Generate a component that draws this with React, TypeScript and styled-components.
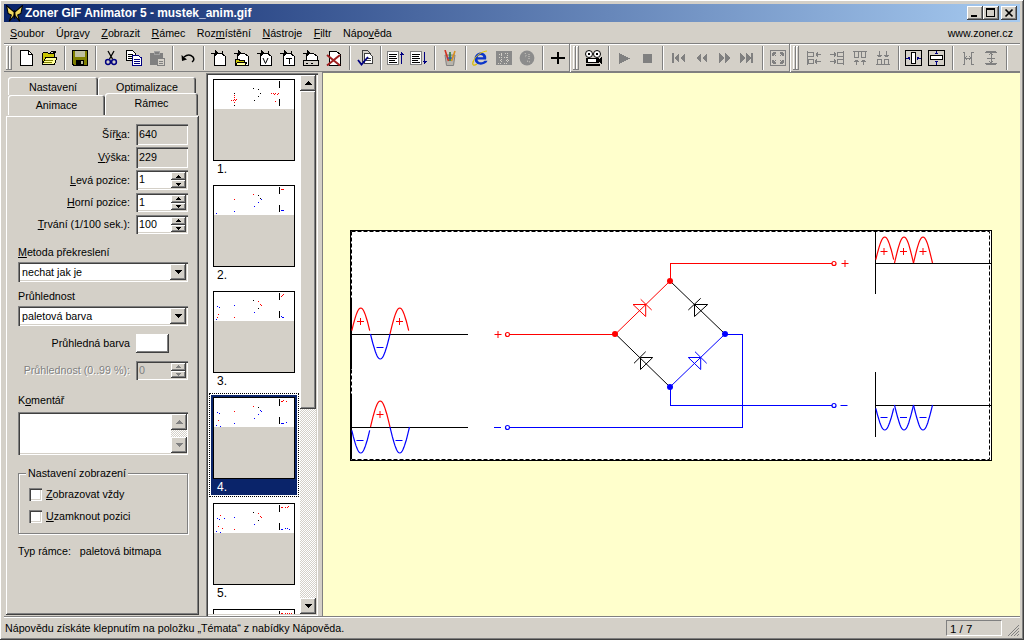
import React from 'react';
import styled, { createGlobalStyle, css } from 'styled-components';

const GlobalStyle = createGlobalStyle`
  html, body { margin: 0; padding: 0; background: #d4d0c8; }
  #root { width: 1024px; height: 640px; overflow: hidden; }
  * { box-sizing: border-box; }
`;

const raised = css`box-shadow: inset -1px -1px 0 #404040, inset 1px 1px 0 #fff, inset -2px -2px 0 #808080, inset 2px 2px 0 #d4d0c8;`;
const sunken = css`box-shadow: inset 1px 1px 0 #808080, inset 2px 2px 0 #404040, inset -1px -1px 0 #fff, inset -2px -2px 0 #d4d0c8;`;
const etched = css`box-shadow: 1px 0 0 #fff; background: #808080;`;
const dither = `repeating-conic-gradient(#fff 0 25%, #d4d0c8 0 50%) 0 0 / 2px 2px`;

const Win = styled.div`
  width: 1024px; height: 640px; padding: 4px 4px 2px; background: #d4d0c8;
  display: flex; flex-direction: column;
  font: 10.7px/13px "Liberation Sans", Arial, sans-serif; color: #000;
  box-shadow: inset -1px -1px 0 #404040, inset 1px 1px 0 #fff, inset -2px -2px 0 #808080;
`;
const TitleBar = styled.div`
  height: 18px; flex: none; display: flex; align-items: center; padding: 0 3px 0 2px;
  background: linear-gradient(90deg, #0a246a, #a6caf0);
`;
const TitleText = styled.span`
  color: #fff; font-weight: 700; font-size: 11.95px; margin-left: 2px; flex: 1; white-space: nowrap;
`;
const CapBtn = styled.span<{ $gap?: number }>`
  width: 16px; height: 14px; background: #d4d0c8; ${raised}; display: flex; margin-left: ${p => p.$gap ?? 0}px;
  svg { display: block; }
`;
const MenuBar = styled.div`
  height: 20px; margin-top: 1px; flex: none; display: flex; align-items: center; padding: 0 7px 0 6px; gap: 11.5px;
`;
const MenuSpacer = styled.span`flex: 1;`;
const MenuItem = styled.span`white-space: nowrap;`;
const ToolRow = styled.div`
  height: 29px; flex: none; display: flex; border-top: 1px solid #808080;
  box-shadow: inset 0 1px 0 #fff, inset 0 -1px 0 #808080;
`;
const ToolGroup = styled.div<{ $end?: boolean }>`
  display: flex; align-items: center; padding-left: 2px; height: 28px;
  ${p => p.$end ? '' : 'border-right: 1px solid #808080; box-shadow: 1px 0 0 #fff; margin-right: 1px;'}
`;
const Grip = styled.div<{ $w: number }>`
  width: ${p => p.$w}px; height: 24px; display: flex; gap: 0; flex: none;
  span { width: 3px; height: 24px; box-shadow: inset -1px -1px 0 #808080, inset 1px 1px 0 #fff; }
`;
const ToolBtn = styled.div`
  width: 23px; height: 22px; flex: none; display: flex; align-items: center; justify-content: center;
  svg { display: block; }
`;
const ToolSep = styled.div`
  width: 8px; height: 24px; flex: none; display: flex; justify-content: center;
  i { width: 1px; height: 24px; display: block; ${etched}; }
`;
const Main = styled.div`flex: 1; min-height: 0; display: flex;`;
const LeftPane = styled.div`width: 202px; flex: none; padding: 5px 0 0 4px; display: flex; flex-direction: column;`;
const TabRow = styled.div`display: flex; height: 18px; flex: none; align-items: flex-end;`;
const Tab = styled.div<{ $w: number; $h: number; $active?: boolean }>`
  width: ${p => p.$w}px; height: ${p => p.$h}px; flex: none; text-align: center; background: #d4d0c8;
  padding-top: 4px; border-radius: 3px 3px 0 0; position: relative;
  box-shadow: inset 1px 1px 0 #fff, inset -1px 0 0 #404040, inset -2px 0 0 #808080;
  ${p => p.$active ? 'z-index: 2;' : ''}
`;
const TabBody = styled.div`
  margin: 1px 0 1px -2px; width: 193px; flex: 1; padding: 8px 11px 0 12px; position: relative; z-index: 1;
  ${raised}; display: flex; flex-direction: column;
`;
const FrontTabs = styled.div`display: flex; height: 20px; flex: none; align-items: flex-end; margin-top: 0;`;
const FieldRow = styled.div<{ $h: number; $mt?: number }>`
  display: grid; grid-template-columns: 1fr 52px; column-gap: 6px; align-items: center;
  height: ${p => p.$h}px; margin-top: ${p => p.$mt ?? 3}px; flex: none;
`;
const Lbl = styled.label<{ $off?: boolean }>`
  text-align: right; white-space: nowrap; display: block;
  ${p => p.$off ? 'color: #808080; text-shadow: 1px 1px 0 #fff;' : ''}
`;
const ReadOnly = styled.div`
  height: 100%; padding: 4px 3px; ${sunken}; background: #d4d0c8;
`;
const Spin = styled.div<{ $off?: boolean }>`
  height: 100%; padding: 3px 0 0 3px; ${sunken}; background: ${p => p.$off ? '#d4d0c8' : '#fff'};
  color: ${p => p.$off ? '#808080' : '#000'}; display: flex; justify-content: space-between;
`;
const SpinBtns = styled.div`width: 15px; margin: -1px 2px 2px 0; display: flex; flex-direction: column;`;
const SpinBtn = styled.div`
  flex: 1; background: #d4d0c8; ${raised}; display: flex; align-items: center; justify-content: center;
`;
const Caption = styled.div<{ $mt: number }>`
  margin-top: ${p => p.$mt}px; height: 14px; flex: none; white-space: nowrap;
`;
const Combo = styled.div`
  height: 20px; margin-top: 2px; flex: none; ${sunken}; background: #fff; padding: 4px 0 0 4px;
  display: flex; justify-content: space-between;
`;
const ComboBtn = styled.div`
  width: 16px; height: 16px; margin: -2px 2px 0 0; background: #d4d0c8; ${raised};
  display: flex; align-items: center; justify-content: center;
`;
const Swatch = styled.div`height: 19px; width: 33px; background: #fff; box-shadow: inset -1px -1px 0 #404040, inset 1px 1px 0 #fff, inset -2px -2px 0 #808080;`;
const Memo = styled.div`
  height: 43px; margin-top: 4px; flex: none; ${sunken}; background: #fff; display: flex; justify-content: flex-end; padding: 2px 1px 2px 0;
`;
const MemoScroll = styled.div`width: 16px; display: flex; flex-direction: column; justify-content: space-between; background: ${dither};`;
const MemoBtn = styled.div`
  width: 16px; height: 16px; background: #d4d0c8; ${raised}; display: flex; align-items: center; justify-content: center;
`;
const Group = styled.div`
  position: relative; height: 61px; margin-top: 18px; flex: none; border: 1px solid #808080; padding: 14px 0 0 10px;
  box-shadow: 1px 1px 0 #fff, inset 1px 1px 0 #fff; display: flex; flex-direction: column; gap: 9px;
`;
const Legend = styled.span`
  position: absolute; top: -7px; left: 7px; background: #d4d0c8; padding: 0 2px; white-space: nowrap;
`;
const CheckRow = styled.div`display: flex; align-items: center; gap: 4px; height: 13px;`;
const CheckBox = styled.span`width: 13px; height: 13px; background: #fff; ${sunken}; flex: none;`;
const InfoLine = styled.div`margin-top: 11px; white-space: pre;`;

const ListFrame = styled.div`
  width: 112px; flex: none; margin-top: 1px; ${sunken}; padding: 2px; display: flex;
`;
const ListInner = styled.div`flex: 1; background: #fff; overflow: hidden; padding: 0 0 0 1px; display: flex; flex-direction: column; gap: 2px;`;
const Item = styled.div<{ $on?: boolean }>`
  width: 90px; height: 104px; flex: none; padding: 1px; border: 1px dotted ${p => p.$on ? '#000' : 'transparent'};
  background: ${p => p.$on ? '#0a246a' : 'transparent'}; background-clip: content-box;
`;
const Thumb = styled.div`
  width: 82px; height: 82px; margin: 2px 0 0 2px; border: 1px solid #000; background: #d4d0c8; overflow: hidden;
`;
const ThumbTop = styled.svg`display: block; width: 80px; height: 29px; background: #fff;`;
const ItemLabel = styled.div<{ $on?: boolean }>`
  padding: 2px 0 0 6px; color: ${p => p.$on ? '#fff' : '#000'}; font-size: 12px;
`;
const VScroll = styled.div`width: 16px; flex: none; display: flex; flex-direction: column; background: ${dither};`;
const VBtn = styled.div`width: 16px; height: 16px; flex: none; background: #d4d0c8; ${raised}; display: flex; align-items: center; justify-content: center;`;
const VThumb = styled.div`width: 16px; height: 318px; flex: none; background: #d4d0c8; ${raised};`;
const VFill = styled.div`flex: 1;`;
const Splitter = styled.div`width: 4px; flex: none;`;
const Canvas = styled.div`
  flex: 1; min-width: 0; background: #ffffcc; padding: 158px 0 0 28px; box-shadow: inset 1px 0 0 #808080, inset 0 1px 0 #808080;
  svg { display: block; }
`;
const Status = styled.div`
  height: 22px; flex: none; display: flex; align-items: center; padding: 0 0 0 1px; box-shadow: inset 0 1px 0 #808080, inset 0 2px 0 #fff;
`;
const StatusText = styled.span`flex: 1; white-space: nowrap; margin-top: 2px;`;
const StatusPanel = styled.div`
  width: 56px; height: 16px; padding: 2px 0 0 3px; margin: 2px 5px 0 0; font-size: 11.5px;
  border: 1px solid #808080; border-right-color: #fff; border-bottom-color: #fff;
`;
const SizeGrip = styled.svg`display: block; margin-top: 6px;`;

/* ---------- icons ---------- */
const I = ({ children, w = 16, h = 16, crisp = true }: { children: React.ReactNode; w?: number; h?: number; crisp?: boolean }) => (
  <svg width={w} height={h} viewBox={`0 0 ${w} ${h}`} shapeRendering={crisp ? 'crispEdges' : 'auto'} fill="none">{children}</svg>
);
const doc = 'M2.5 .5H10.5L14.5 4.5V15.5H2.5Z';
const Corner = () => <path d="M10.5 .5V4.5H14.5" stroke="#000" />;
const Arrow = () => <path d="M0 2.5H4V0L8 3L4 6V4H0Z" fill="#000" />;
const FrameDoc = ({ children }: { children?: React.ReactNode }) => (
  <I>
    <path d="M3.5 3.5H10.5L14.5 6.5V15.5H3.5Z" fill="#fff" stroke="#000" />
    <path d="M11 1V4" stroke="#000" />
    <Arrow />
    {children}
  </I>
);
const gr = '#808080';
const ic: Record<string, React.ReactNode> = {
  newDoc: <I><path d={doc} fill="#fff" stroke="#000" /><Corner /></I>,
  open: <I>
    <path d="M1.5 3.5L3 2H6L7.5 3.5H13.5V14.5H1.5Z" fill="#c8c400" stroke="#000" />
    <path d="M1.5 14.5L4.5 7.5H16L13.5 14.5Z" fill="#ffff9c" stroke="#000" />
    <path d="M9 2.5Q12 0 14 2M14 .5V2.5H12" stroke="#000" />
    <path d="M3 12h8M4 10h8" stroke="#808000" /></I>,
  save: <I>
    <path d="M.5 .5H15.5V15.5H2L.5 14Z" fill="#808000" stroke="#000" />
    <rect x="3" y="1" width="10" height="6" fill="#c0c0a0" />
    <rect x="4" y="10" width="8" height="5" fill="#000" />
    <rect x="9" y="11" width="2" height="3" fill="#c0c0a0" /></I>,
  cut: <I crisp={false}>
    <path d="M5 1L9.5 9M11 1L6.5 9" stroke="#000" strokeWidth="1.3" />
    <circle cx="5" cy="12" r="2.4" stroke="#000080" strokeWidth="1.5" />
    <circle cx="11" cy="12" r="2.4" stroke="#000080" strokeWidth="1.5" /></I>,
  copy: <I>
    <path d="M.5 .5H6.5L9.5 3.5V10.5H.5Z" fill="#fff" stroke="#000" />
    <path d="M2 4h5M2 6h5M2 8h5" stroke="#000" />
    <path d="M6.5 5.5H12.5L15.5 8V15.5H6.5Z" fill="#fff" stroke="#000080" />
    <path d="M8 9h6M8 11h6M8 13h6" stroke="#000080" /></I>,
  paste: <I>
    <path d="M1 3H14V15H1Z" fill={gr} />
    <path d="M5 1H10V4H5Z" fill={gr} stroke="#a0a0a0" />
    <path d="M8.5 8.5H15.5V15.5H8.5Z" fill="#d4d0c8" stroke={gr} />
    <path d="M10 11h4M10 13h4" stroke={gr} /></I>,
  undo: <I crisp={false}>
    <path d="M4 7Q9 3 13 7Q15 10 12 12" stroke="#000" strokeWidth="1.5" />
    <path d="M1.5 5L2 11L7 9.5Z" fill="#000" /></I>,
  fNew: <FrameDoc />,
  fOpen: <I>
    <path d="M3.5 3.5H10.5L14.5 6.5V15.5H3.5Z" fill="#fff" stroke="#000" />
    <Arrow />
    <path d="M1.5 9.5H5L6 10.5H10.5V15.5H1.5Z" fill="#c8c400" stroke="#000" />
    <path d="M1.5 15.5L3.5 12H13L10.5 15.5Z" fill="#ffff9c" stroke="#000" /></I>,
  fV: <FrameDoc><path d="M6 8L8.5 13.5L11 8" stroke="#000" strokeWidth="1" shapeRendering="auto" /></FrameDoc>,
  fT: <FrameDoc><path d="M6 8H12M9 8V14" stroke="#000" /></FrameDoc>,
  fScan: <I>
    <path d="M3.5 3.5H10.5L14.5 6.5V10H3.5Z" fill="#fff" stroke="#000" />
    <Arrow />
    <path d="M.5 10.5H15.5V15.5H.5Z" fill="#d4d0c8" stroke="#000" />
    <path d="M3 13h2M8 13h2" stroke="#000" /></I>,
  fDel: <I>
    <path d="M3.5 1.5H10.5L14.5 4.5V15.5H3.5Z" fill="#fff" stroke="#000" />
    <g shapeRendering="auto"><path d="M1 5L14 15.5M14 5L1 15.5" stroke="#a02020" strokeWidth="2" /></g></I>,
  check: <I>
    <path d="M5.5 .5H10.5L13.5 3.5V11.5H5.5Z" fill="#d4d0c8" stroke="#404040" />
    <path d="M7.5 3.5H12.5L15.5 6.5V13.5H7.5Z" fill="#fff" stroke="#404040" />
    <path d="M9 8h5M9 10h5" stroke="#404040" />
    <g shapeRendering="auto"><path d="M1 10L4.5 14.5L11 7" stroke="#000080" strokeWidth="1.8" /></g></I>,
  lstUp: <I w={17}>
    <rect x=".5" y="1.5" width="11" height="13" fill="#fff" stroke={gr} />
    <path d="M2 4h8M2 6h7M2 8h8M2 10h6M2 12h8" stroke="#000" />
    <path d="M14.5 2V14" stroke="#000080" /><path d="M12.5 4.5h4M13.5 3.5h2" stroke="#000080" /></I>,
  lstDn: <I w={17}>
    <rect x=".5" y="1.5" width="11" height="13" fill="#fff" stroke={gr} />
    <path d="M2 4h8M2 6h7M2 8h8M2 10h6M2 12h8" stroke="#000" />
    <path d="M14.5 2V14" stroke="#000080" /><path d="M12.5 11.5h4M13.5 12.5h2" stroke="#000080" /></I>,
  brush: <I crisp={false}>
    <path d="M3 5H13L11.5 15.5H4.5Z" fill="#b8b4ac" stroke="#808080" />
    <path d="M3 0L6.5 11" stroke="#d03020" strokeWidth="1.6" />
    <path d="M8 2V11" stroke="#208040" strokeWidth="1.6" />
    <path d="M13 1L9.5 11" stroke="#d89020" strokeWidth="1.6" />
    <path d="M5.5 8L10 8" stroke="#2040c0" strokeWidth="1" /></I>,
  ie: <I crisp={false} w={17}>
    <path d="M14 9.5H5.5C5.5 12.5 10 13.5 12.5 10.8H15.5C13.5 16 3 16.5 2.5 9C2.5 3.5 8.5 1 12 3.5C14.5 5.5 14.5 7.5 14 9.5ZM5.6 7.3H11.3C11 4.5 6.3 4.3 5.6 7.3Z" fill="#0b35c9" />
    <path d="M1.5 11C-.5 15.5 2 16 5 14" stroke="#d8b800" strokeWidth="1.2" />
    <path d="M1 11.5C4 5 10 1.5 15 1" stroke="#e8c800" strokeWidth="1" />
  </I>,
  dith: <I><rect x="0" y="1" width="16" height="14" fill="#8a8a8a" />
    <path d="M3 4h3M9 3h4M3 7h4M8 7h4M4 10h2M10 10h4M2 13h3M8 13h3M5 3v9M11 3v10" stroke="#d4d0c8" strokeDasharray="1 1" /></I>,
  globe: <I crisp={false}><circle cx="8" cy="8" r="7.4" fill="#8c8c8c" />
    <path d="M6 3Q8 6 6 7M10 4V9M8 11L11 12" stroke="#d4d0c8" strokeDasharray="1 1" /></I>,
  plus: <I><rect x="1" y="7" width="14" height="2" fill="#000" /><rect x="7" y="2" width="2" height="12" fill="#000" /></I>,
  film: <I w={18}>
    <circle cx="5" cy="4" r="3.5" fill="#fff" stroke="#000" shapeRendering="auto" />
    <circle cx="13" cy="4" r="3.5" fill="#fff" stroke="#000" shapeRendering="auto" />
    <path d="M4 3h2v2h-2zM12 3h2v2h-2z" fill="#000" />
    <rect x="2" y="8" width="13" height="5" fill="#000" />
    <rect x="4" y="9" width="8" height="3" fill="#fff" />
    <rect x="2" y="14" width="14" height="2" fill="#000" />
    <path d="M15 9L18 7V14L15 12Z" fill="#000" /></I>,
  play: <I><path d="M3 3L14 8.5L3 14Z" fill={gr} /></I>,
  stop: <I><rect x="4" y="4" width="9" height="9" fill={gr} /></I>,
  first: <I><rect x="2" y="3" width="2" height="10" fill={gr} /><path d="M9 3V13L4 8ZM15 3V13L10 8Z" fill={gr} /></I>,
  prev: <I><path d="M8 3V13L3 8ZM14 3V13L9 8Z" fill={gr} /></I>,
  next: <I><path d="M3 3V13L8 8ZM9 3V13L14 8Z" fill={gr} /></I>,
  last: <I><path d="M1 3V13L6 8ZM7 3V13L12 8Z" fill={gr} /><rect x="12" y="3" width="2" height="10" fill={gr} /></I>,
  fit: <I><rect x=".5" y=".5" width="15" height="15" stroke={gr} fill="#d4d0c8" />
    <path d="M3 3h3M3 3v3M13 3h-3M13 3v3M3 13h3M3 13v-3M13 13h-3M13 13v-3" stroke={gr} strokeWidth="1.5" />
    <path d="M6 6l-3 -3M10 6l3 -3M6 10l-3 3M10 10l3 3" stroke={gr} shapeRendering="auto" /></I>,
  a1: <I><path d="M1.5 1V15" stroke={gr} /><path d="M2 2.5H7.5V6.5H2M2 9.5H7.5V13.5H2Z" stroke={gr} /><path d="M10 4.5h5M10 4.5l2 -2M10 4.5l2 2M9 11.5h6M9 11.5l2 -2M9 11.5l2 2" stroke={gr} /></I>,
  a2: <I><path d="M14.5 1V15" stroke={gr} /><path d="M14 2.5H8.5V6.5H14M14 9.5H8.5V13.5H14Z" stroke={gr} /><path d="M1 4.5h6M7 4.5l-2 -2M7 4.5l-2 2M1 11.5h6M7 11.5l-2 -2M7 11.5l-2 2" stroke={gr} /></I>,
  a3: <I><path d="M1 1.5H15" stroke={gr} /><path d="M2.5 2V7.5H6.5V2M9.5 2V7.5H13.5V2" stroke={gr} /><path d="M4.5 15V10M4.5 10l-2 2M4.5 10l2 2M11.5 15V10M11.5 10l-2 2M11.5 10l2 2" stroke={gr} /></I>,
  a4: <I><path d="M1 14.5H15" stroke={gr} /><path d="M2.5 14V9.5H6.5V14M9.5 14V9.5H13.5V14" stroke={gr} /><path d="M4.5 1V7M4.5 7l-2 -2M4.5 7l2 -2M11.5 1V7M11.5 7l-2 -2M11.5 7l2 -2" stroke={gr} /></I>,
  cH: <I w={17}><rect x=".5" y=".5" width="16" height="15" fill="#d4d0c8" stroke="#000" />
    <rect x="6.5" y="2.5" width="4" height="11" fill="#fff" stroke="#000" />
    <path d="M1 8h4M12 8h4M4.5 6.5v3M12.5 6.5v3M3.5 7v2M13.5 7v2" stroke="#000080" /></I>,
  cV: <I w={17}><rect x=".5" y=".5" width="16" height="15" fill="#d4d0c8" stroke="#000" />
    <rect x="2.5" y="5.5" width="12" height="4" fill="#fff" stroke="#000" />
    <path d="M8.5 1v3M8.5 11v4M7 3.5h3M7 11.5h3" stroke="#000080" /></I>,
  dH: <I><path d="M2.5 2H4.5V14H2.5M13.5 2H11.5V14H13.5" stroke={gr} /><path d="M5 8H11M5 8l2 -2M5 8l2 2M11 8l-2 -2M11 8l-2 2" stroke={gr} /></I>,
  dV: <I><path d="M2 2.5H14M2 13.5H14M3 1.5h10M3 14.5h10" stroke={gr} /><path d="M8 3V13M8 3l-2 2M8 3l2 2M8 13l-2 -2M8 13l2 -2M4 8h8" stroke={gr} /></I>,
};

const Tools = ({ items }: { items: string[] }) => (
  <>
    {items.map((k, i) =>
      k === '|' ? <ToolSep key={i}><i /></ToolSep> : <ToolBtn key={i}>{ic[k]}</ToolBtn>
    )}
  </>
);

const Tri = ({ up, c = '#000' }: { up?: boolean; c?: string }) => (
  <svg width="7" height="4" viewBox="0 0 7 4" shapeRendering="crispEdges" style={{ display: 'block' }}>
    <path d={up ? 'M3 0h1v1h1v1h1v1h1v1H0V3h1V2h1V1h1z' : 'M0 0h7v1H6v1H5v1H4v1H3V3H2V2H1V1H0z'} fill={c} />
  </svg>
);
const Tiny = ({ up, c = '#000' }: { up?: boolean; c?: string }) => (
  <svg width="5" height="3" viewBox="0 0 5 3" shapeRendering="crispEdges" style={{ display: 'block' }}>
    <path d={up ? 'M2 0h1v1h1v1h1v1H0V2h1V1h1z' : 'M0 0h5v1H4v1H3v1H2V2H1V1H0z'} fill={c} />
  </svg>
);

const SpinBox = ({ v, off }: { v: string; off?: boolean }) => (
  <Spin $off={off}>
    <span>{v}</span>
    <SpinBtns>
      <SpinBtn><Tiny up c={off ? gr : '#000'} /></SpinBtn>
      <SpinBtn><Tiny c={off ? gr : '#000'} /></SpinBtn>
    </SpinBtns>
  </Spin>
);

/* ---------- thumbnails ---------- */
type D = [number, number, string];
const R = '#f00', B = '#00f', K = '#000';
const dots: D[][] = [
  [[39, 8, K], [44, 9, K], [46, 13, K], [44, 16, K], [40, 20, K], [20, 13, K], [20, 15, R], [20, 17, R], [20, 19, R], [17, 20, R], [19, 20, R], [21, 20, R], [22, 19, R], [20, 22, R], [20, 25, K], [57, 13, R], [59, 13, R], [60, 14, R], [61, 13, R], [63, 14, R], [64, 13, R], [61, 21, R]],
  [[39, 8, R], [44, 9, K], [46, 12, K], [47, 13, B], [44, 16, B], [40, 20, B], [20, 13, R], [20, 25, B], [2, 27, B], [67, 3, R], [68, 3, R], [69, 3, R], [67, 24, B], [68, 24, B], [69, 24, B]],
  [[39, 8, K], [44, 9, R], [46, 12, R], [47, 13, R], [44, 16, K], [40, 20, B], [20, 13, B], [20, 25, R], [3, 14, B], [5, 15, B], [4, 22, R], [3, 25, R], [2, 27, B], [68, 3, R], [69, 2, R], [67, 4, R], [68, 25, B], [69, 25, B], [67, 24, B]],
  [[39, 8, R], [44, 9, K], [46, 12, B], [47, 13, B], [44, 16, B], [40, 20, B], [20, 13, R], [20, 25, B], [3, 14, B], [5, 15, B], [4, 22, R], [2, 27, B], [6, 28, B], [67, 3, R], [68, 3, R], [69, 2, R], [72, 3, R], [67, 25, B], [68, 25, B], [69, 25, B], [72, 24, B]],
  [[39, 8, K], [44, 9, R], [46, 12, R], [47, 13, R], [44, 16, K], [40, 20, B], [20, 13, B], [20, 25, R], [6, 11, R], [3, 14, B], [5, 15, B], [10, 14, B], [4, 22, R], [8, 24, R], [2, 27, B], [6, 28, B], [67, 3, R], [68, 3, R], [71, 3, R], [73, 3, R], [74, 2, R], [67, 25, B], [68, 25, B], [71, 24, B], [73, 24, B], [75, 25, B]],
  [[67, 3, R], [68, 3, R], [71, 3, R], [73, 3, R], [75, 3, R], [77, 3, R]],
];
const ThumbArt = ({ i }: { i: number }) => (
  <ThumbTop viewBox="0 0 80 29" shapeRendering="crispEdges">
    <path d="M65.5 1V8M65.5 19V26" stroke="#000" />
    {dots[i].map(([x, y, c], n) => <rect key={n} x={x} y={y} width="1" height="1" fill={c} />)}
  </ThumbTop>
);

/* ---------- diagram ---------- */
const wave = (x0: number, x1: number, base: number, amp: number, skip = 0) => {
  const pts: string[] = [];
  const n = 24;
  for (let k = skip; k <= n - skip; k++) {
    const t = k / n;
    pts.push(`${(x0 + (x1 - x0) * t).toFixed(1)} ${(base - amp * Math.sin(Math.PI * t)).toFixed(1)}`);
  }
  return 'M' + pts.join('L');
};
const Plus = ({ x, y, c }: { x: number; y: number; c: string }) => <path d={`M${x - 3.5} ${y}h7M${x} ${y - 3.5}v7`} stroke={c} strokeWidth="1" />;
const Minus = ({ x, y, c }: { x: number; y: number; c: string }) => <path d={`M${x - 3.5} ${y}h7`} stroke={c} strokeWidth="1" />;
const Term = ({ x, y, c }: { x: number; y: number; c: string }) => <circle cx={x} cy={y} r="2" fill="#fff" stroke={c} strokeWidth="1.2" />;
const Diode = ({ tri, bar, c }: { tri: string; bar: string; c: string }) => (
  <g stroke={c} strokeWidth="1" fill="none"><path d={`M${tri}Z`} /><path d={`M${bar}`} /></g>
);
const RED = '#f00', BLUE = '#00f';
const Diagram = () => (
  <svg width="642" height="231" viewBox="350 230 642 231">
    <rect x="350" y="230" width="642" height="231" fill="#fff" />
    <rect x="350.5" y="230.5" width="641" height="230" fill="none" stroke="#000" />
    <rect x="351.5" y="231.5" width="638" height="228" fill="none" stroke="#000" strokeDasharray="4 2" />

    <g stroke="#000" strokeWidth="1.2" fill="none" shapeRendering="crispEdges">
      <path d="M351.5 300V369M351.5 396V459M352 334.5H468M352 427.5H468" />
      <path d="M875.5 231V294M875.5 372V437M875 263.5H991M875 405.5H991" />
    </g>

    <g fill="none" strokeWidth="1.2">
      <path d={wave(351, 370.5, 334, 26, 1)} stroke={RED} />
      <path d={wave(370.5, 390, 334, -25)} stroke={BLUE} />
      <path d={wave(390, 409.5, 334, 26).split('L').slice(0, 24).join('L')} stroke={RED} />
      <path d={wave(351, 370.5, 427, -26, 1)} stroke={BLUE} />
      <path d={wave(370.5, 390, 427, 26)} stroke={RED} />
      <path d={wave(390, 409.5, 427, -26)} stroke={BLUE} />
      <path d={wave(875, 894.5, 263, 26, 1)} stroke={RED} />
      <path d={wave(894.5, 913.5, 263, 26)} stroke={RED} />
      <path d={wave(913.5, 932.5, 263, 26)} stroke={RED} />
      <path d={wave(875, 894.5, 405, -25, 1)} stroke={BLUE} />
      <path d={wave(894.5, 913.5, 405, -25)} stroke={BLUE} />
      <path d={wave(913.5, 932.5, 405, -25)} stroke={BLUE} />
    </g>
    <Plus x={360.5} y={321.5} c={RED} /><Plus x={399.5} y={321.5} c={RED} /><Minus x={380} y={347.5} c={BLUE} />
    <Plus x={380} y={414.5} c={RED} /><Minus x={360} y={440.5} c={BLUE} /><Minus x={399} y={440.5} c={BLUE} />
    <Plus x={884} y={251.5} c={RED} /><Plus x={903.5} y={251.5} c={RED} /><Plus x={923} y={251.5} c={RED} />
    <Minus x={884} y={417.5} c={BLUE} /><Minus x={903.5} y={417.5} c={BLUE} /><Minus x={923} y={417.5} c={BLUE} />

    <path d="M509 334.5H615" stroke={RED} strokeWidth="1.4" shapeRendering="crispEdges" />
    <path d="M509 427.5H742.5V334.5H725" stroke={BLUE} strokeWidth="1.4" fill="none" shapeRendering="crispEdges" />
    <path d="M670.5 281V263.5H832" stroke={RED} strokeWidth="1.4" fill="none" shapeRendering="crispEdges" />
    <path d="M670.5 387V405.5H832" stroke={BLUE} strokeWidth="1.4" fill="none" shapeRendering="crispEdges" />

    <path d="M615.5 334L670 281" stroke={RED} strokeWidth="1" />
    <path d="M670 281L725 334" stroke="#000" strokeWidth="1" />
    <path d="M615.5 334L670 387" stroke="#000" strokeWidth="1" />
    <path d="M670 387L725 334" stroke={BLUE} strokeWidth="1" />

    <Diode tri="633 304.5H645.7V316.5" bar="640.7 299.3L651.7 310" c={RED} />
    <Diode tri="694.5 304.5H707.7L694.5 316.5" bar="688.3 310L700.7 298.3" c="#000" />
    <Diode tri="640.5 357.5H652.7L640.5 369.5" bar="634 363.3L645.7 351.7" c="#000" />
    <Diode tri="688.3 357.5H700.7V369.5" bar="695 351.7L706.7 363.3" c={BLUE} />

    <circle cx="670" cy="281" r="3" fill={RED} /><circle cx="615" cy="334" r="3" fill={RED} />
    <circle cx="725" cy="334" r="3" fill={BLUE} /><circle cx="670" cy="387" r="3" fill={BLUE} />

    <Plus x={498} y={334.5} c={RED} /><Term x={507.5} y={334.5} c={RED} />
    <Minus x={497.5} y={427.5} c={BLUE} /><Term x={507.5} y={427.5} c={BLUE} />
    <Term x={834} y={263.5} c={RED} /><Plus x={845} y={263.5} c={RED} />
    <Term x={834} y={405.5} c={BLUE} /><Minus x={844} y={405.5} c={BLUE} />
  </svg>
);

const Butterfly = () => (
  <svg width="17" height="17" viewBox="0 0 16 16" style={{ display: 'block' }}>
    <path d="M8 7L.5 .5L2 8L5 9.5L3 15.5L7.5 10Z" fill="#f0d860" stroke="#000" strokeWidth="1" />
    <path d="M8 7L15.5 .5L14 8L11 9.5L13 15.5L8.5 10Z" fill="#f0d860" stroke="#000" strokeWidth="1" />
    <path d="M8 5V13" stroke="#000" strokeWidth="1.4" />
  </svg>
);

const items = [0, 1, 2, 3, 4, 5];

export default function App() {
  return (
    <>
      <GlobalStyle />
      <Win>
        <TitleBar>
          <Butterfly />
          <TitleText>Zoner GIF Animator 5 - mustek_anim.gif</TitleText>
          <CapBtn><svg width="16" height="14" shapeRendering="crispEdges"><rect x="4" y="9" width="6" height="2" fill="#000" /></svg></CapBtn>
          <CapBtn><svg width="16" height="14" shapeRendering="crispEdges"><path d="M3.5 3.5h8v7h-8zM3 2.5h9" stroke="#000" fill="none" /></svg></CapBtn>
          <CapBtn $gap={2}><svg width="16" height="14"><path d="M4.5 3.5L11.5 10.5M11.5 3.5L4.5 10.5" stroke="#000" strokeWidth="1.7" /></svg></CapBtn>
        </TitleBar>
        <MenuBar>
          <MenuItem><u>S</u>oubor</MenuItem>
          <MenuItem>Úpr<u>a</u>vy</MenuItem>
          <MenuItem><u>Z</u>obrazit</MenuItem>
          <MenuItem><u>R</u>ámec</MenuItem>
          <MenuItem>Roz<u>m</u>ístění</MenuItem>
          <MenuItem><u>N</u>ástroje</MenuItem>
          <MenuItem><u>F</u>iltr</MenuItem>
          <MenuItem>Nápo<u>v</u>ěda</MenuItem>
          <MenuSpacer />
          <MenuItem>www.zoner.cz</MenuItem>
        </MenuBar>
        <ToolRow>
          <ToolGroup>
            <Grip $w={8}><span /><span /></Grip>
            <Tools items={['newDoc', 'open', '|', 'save', '|', 'cut', 'copy', 'paste', '|', 'undo', '|', 'fNew', 'fOpen', 'fV', 'fT', 'fScan', 'fDel', '|', 'check', '|', 'lstUp', 'lstDn', '|', 'brush', '|', 'ie', 'dith', 'globe', '|', 'plus']} />
          </ToolGroup>
          <ToolGroup>
            <Grip $w={8}><span /><span /></Grip>
            <Tools items={['film', '|', 'play', 'stop', '|', 'first', 'prev', 'next', 'last', '|', 'fit']} />
          </ToolGroup>
          <ToolGroup $end>
            <Grip $w={9}><span /><span /></Grip>
            <Tools items={['a1', 'a2', 'a3', 'a4', '|', 'cH', 'cV', '|', 'dH', 'dV', '|']} />
          </ToolGroup>
        </ToolRow>
        <Main>
          <LeftPane>
            <TabRow>
              <Tab $w={90} $h={18}>Nastavení</Tab>
              <Tab $w={98} $h={18}>Optimalizace</Tab>
            </TabRow>
            <FrontTabs>
              <Tab $w={97} $h={20}>Animace</Tab>
              <Tab $w={93} $h={22} $active>Rámec</Tab>
            </FrontTabs>
            <TabBody>
              <FieldRow $h={20} $mt={0}><Lbl>Šíř<u>k</u>a:</Lbl><ReadOnly>640</ReadOnly></FieldRow>
              <FieldRow $h={20}><Lbl><u>V</u>ýška:</Lbl><ReadOnly>229</ReadOnly></FieldRow>
              <FieldRow $h={20}><Lbl><u>L</u>evá pozice:</Lbl><SpinBox v="1" /></FieldRow>
              <FieldRow $h={19}><Lbl><u>H</u>orní pozice:</Lbl><SpinBox v="1" /></FieldRow>
              <FieldRow $h={19}><Lbl><u>T</u>rvání (1/100 sek.):</Lbl><SpinBox v="100" /></FieldRow>
              <Caption $mt={12}><u>M</u>etoda překreslení</Caption>
              <Combo>nechat jak je<ComboBtn><Tri /></ComboBtn></Combo>
              <Caption $mt={8}>Průhlednost</Caption>
              <Combo>paletová barva<ComboBtn><Tri /></ComboBtn></Combo>
              <FieldRow $h={19} $mt={8}><Lbl>Průhledná barva</Lbl><Swatch /></FieldRow>
              <FieldRow $h={19} $mt={8}><Lbl $off>Průhlednost (0..99 %):</Lbl><SpinBox v="0" off /></FieldRow>
              <Caption $mt={14}>K<u>o</u>mentář</Caption>
              <Memo>
                <MemoScroll>
                  <MemoBtn><Tri up c={gr} /></MemoBtn>
                  <MemoBtn><Tri c={gr} /></MemoBtn>
                </MemoScroll>
              </Memo>
              <Group>
                <Legend>Nastavení zobrazení</Legend>
                <CheckRow><CheckBox /><span><u>Z</u>obrazovat vždy</span></CheckRow>
                <CheckRow><CheckBox /><span><u>U</u>zamknout pozici</span></CheckRow>
              </Group>
              <InfoLine>{'Typ rámce:   paletová bitmapa'}</InfoLine>
            </TabBody>
          </LeftPane>
          <ListFrame>
            <ListInner>
              {items.map(i => (
                <Item key={i} $on={i === 3}>
                  <Thumb><ThumbArt i={i} /></Thumb>
                  {i < 5 && <ItemLabel $on={i === 3}>{i + 1}.</ItemLabel>}
                </Item>
              ))}
            </ListInner>
            <VScroll>
              <VBtn><Tri up /></VBtn>
              <VThumb />
              <VFill />
              <VBtn><Tri /></VBtn>
            </VScroll>
          </ListFrame>
          <Splitter />
          <Canvas><Diagram /></Canvas>
        </Main>
        <Status>
          <StatusText>Nápovědu získáte klepnutím na položku „Témata“ z nabídky Nápověda.</StatusText>
          <StatusPanel>1 / 7</StatusPanel>
          <SizeGrip width="13" height="13" viewBox="0 0 13 13" shapeRendering="crispEdges">
            <path d="M12 1L1 12M12 4L4 12M12 7L7 12M12 10L10 12" stroke="#808080" shapeRendering="auto" />
          </SizeGrip>
        </Status>
      </Win>
    </>
  );
}
